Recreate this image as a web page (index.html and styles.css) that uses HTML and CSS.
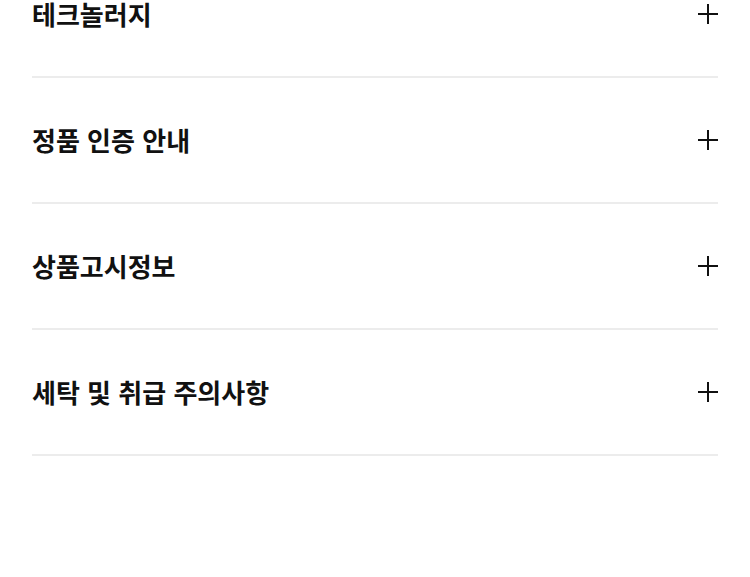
FILE: index.html
```html
<!DOCTYPE html>
<html lang="ko">
<head>
<meta charset="utf-8">
<link rel="stylesheet" href="styles.css">
</head>
<body>
<div class="accordion">
  <div class="item first">
    <span class="title">테크놀러지</span>
    <span class="plus"></span>
  </div>
  <div class="item">
    <span class="title">정품 인증 안내</span>
    <span class="plus"></span>
  </div>
  <div class="item">
    <span class="title">상품고시정보</span>
    <span class="plus"></span>
  </div>
  <div class="item">
    <span class="title">세탁 및 취급 주의사항</span>
    <span class="plus"></span>
  </div>
</div>
</body>
</html>
```
FILE: styles.css
```css
html, body {
  margin: 0;
  padding: 0;
  background: #fff;
}
.accordion {
  padding: 0 32px;
  font-family: "Noto Sans CJK KR", "Noto Sans", sans-serif;
}
.item {
  display: flex;
  align-items: center;
  justify-content: space-between;
  padding: 48px 0;
  border-bottom: 2px solid #ececec;
}
.item.first {
  padding-top: 0;
}
.title {
  font-size: 26px;
  line-height: 28px;
  font-weight: 700;
  color: #111;
  letter-spacing: 0;
}
.plus {
  position: relative;
  width: 20px;
  height: 20px;
}
.plus::before,
.plus::after {
  content: "";
  position: absolute;
  background: #111;
}
.plus::before {
  left: 0;
  right: 0;
  top: 9px;
  height: 2px;
}
.plus::after {
  top: 0;
  bottom: 0;
  left: 9px;
  width: 2px;
}
```
